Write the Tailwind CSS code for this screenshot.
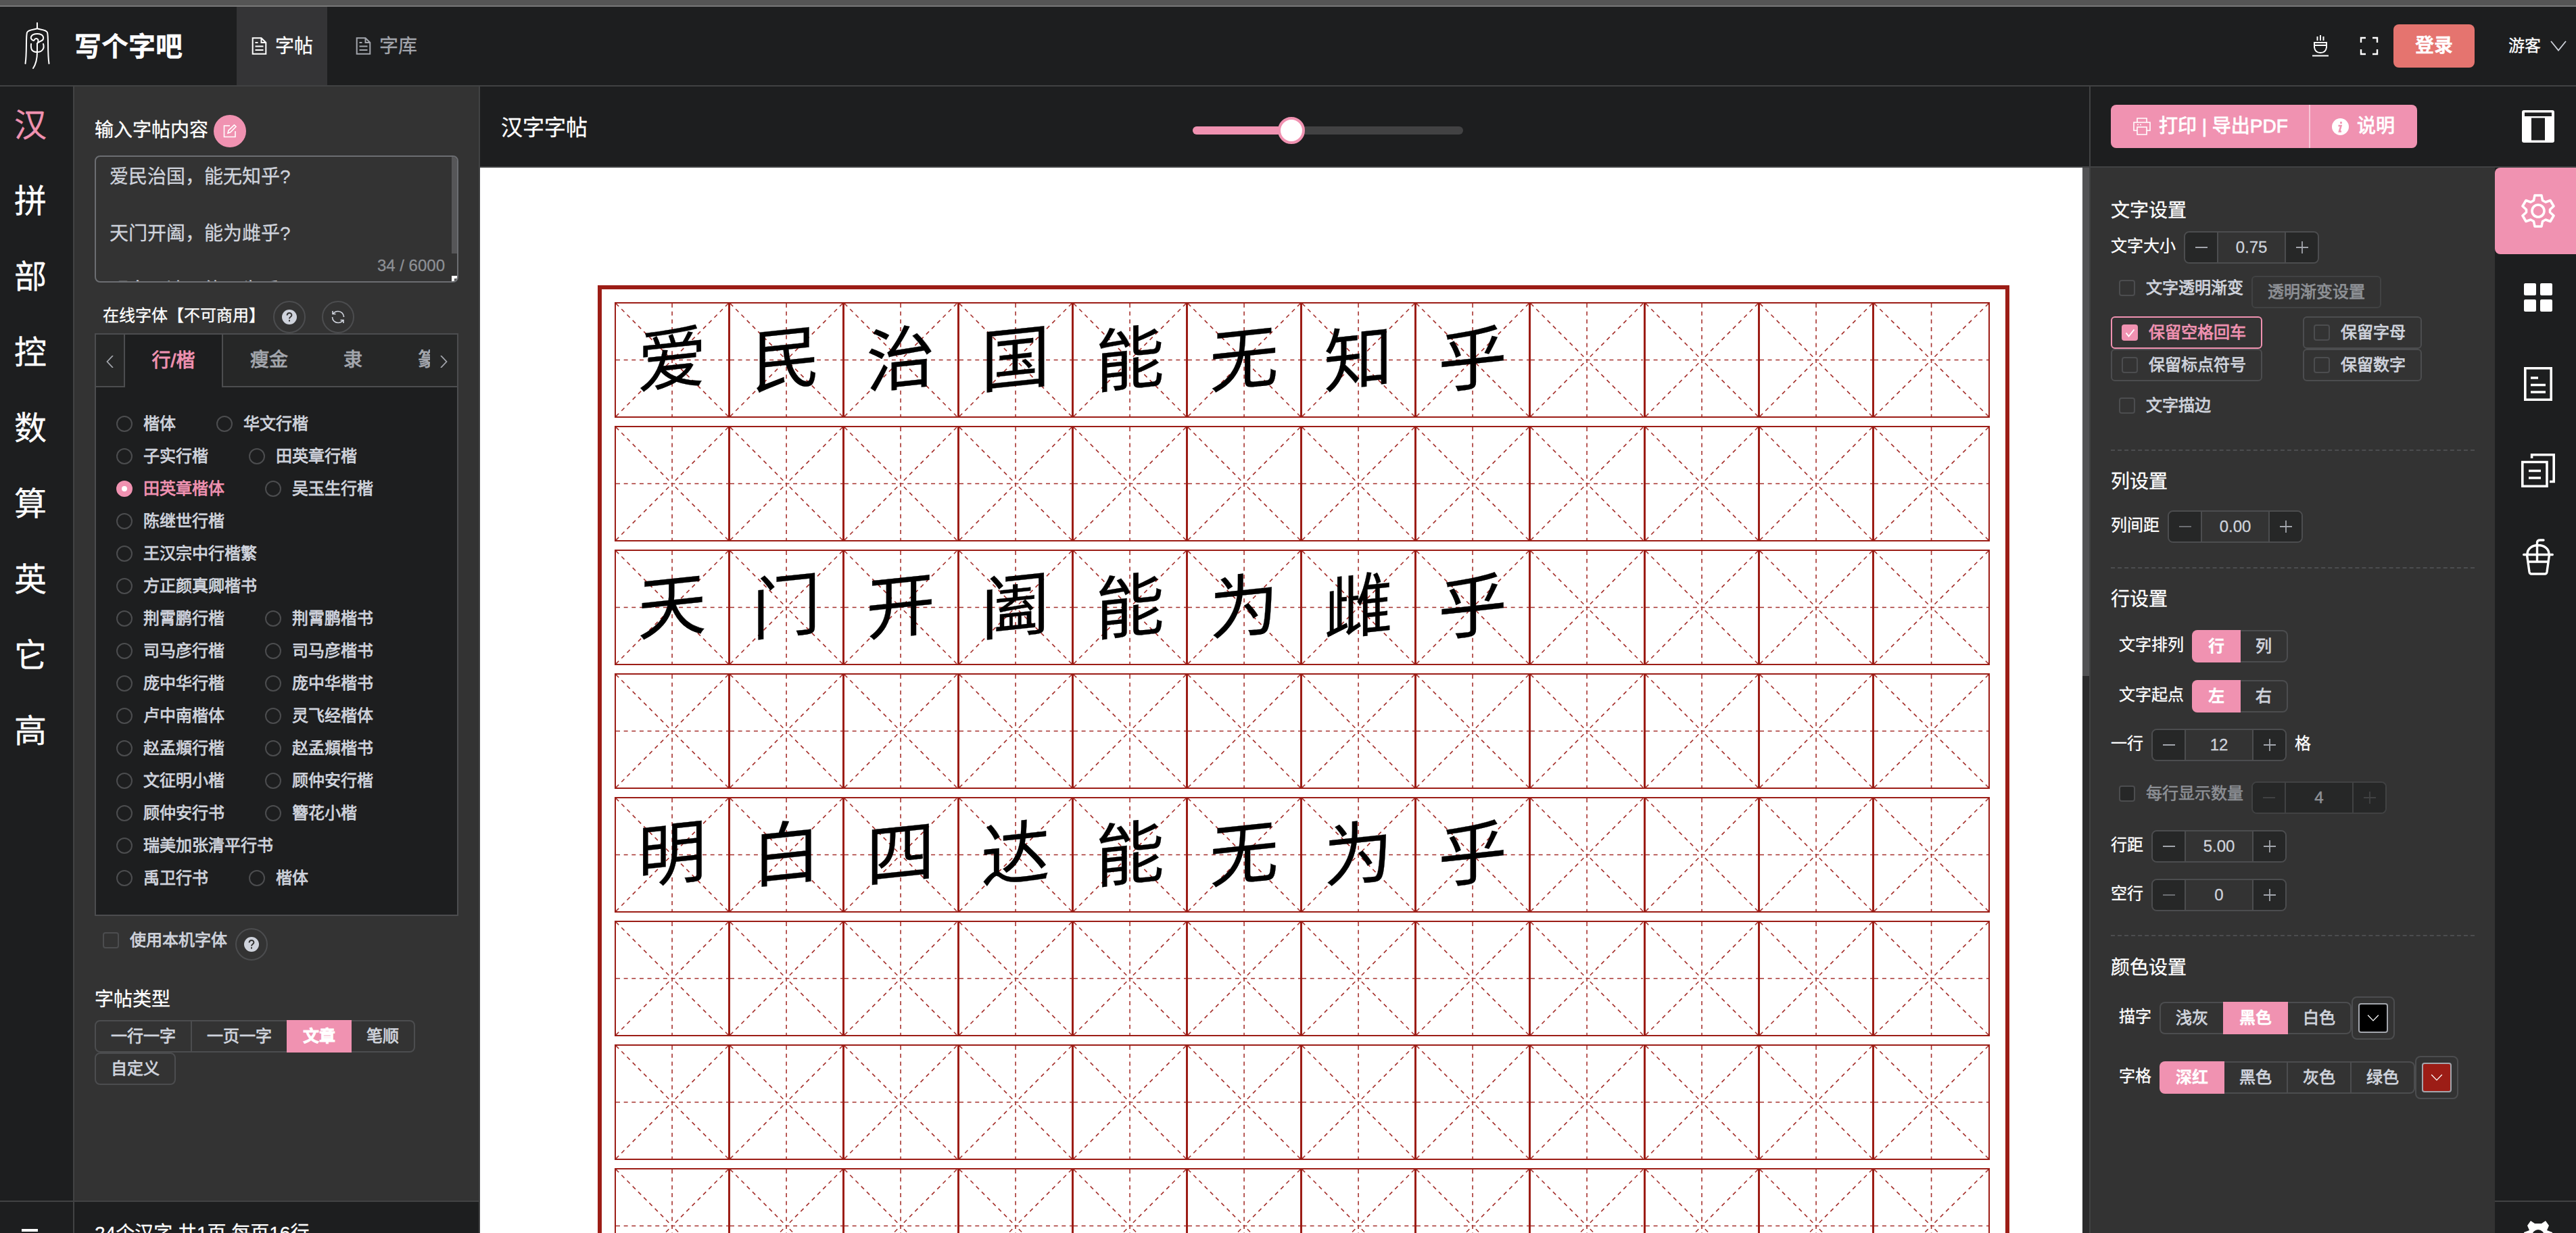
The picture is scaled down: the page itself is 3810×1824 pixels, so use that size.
<!DOCTYPE html>
<html lang="zh-CN">
<head>
<meta charset="utf-8">
<title>写个字吧</title>
<script src="https://cdn.jsdelivr.net/npm/@tailwindcss/browser@4"></script>
</head>
<body class="w-[3810px] h-[1824px] overflow-hidden bg-[#1d1e1f] text-white text-[24px] leading-none whitespace-nowrap font-['Liberation_Sans','Noto_Sans_CJK_SC',sans-serif] [-webkit-text-stroke:0.3px_currentColor]">
<svg class="hidden">
  <symbol id="mi" viewBox="0 0 167 167" preserveAspectRatio="none">
    <g stroke="#a5302c" stroke-width="1.6" stroke-dasharray="6 5.7" fill="none">
      <path d="M0 83.5H167M83.5 0V167M0 0L83.5 83.5M167 0L83.5 83.5M167 167L83.5 83.5M0 167L83.5 83.5"/>
    </g>
  </symbol>
  <symbol id="doc" viewBox="0 0 22 26"><path d="M1.2 1.2H14L20.8 8V24.8H1.2ZM14 1.2V8H20.8M5 8H9M5 13.5H17M5 19H17" fill="none" stroke="currentColor" stroke-width="2"/></symbol>
  <symbol id="help" viewBox="0 0 22 22"><circle cx="11" cy="11" r="11" fill="#cfd3dc"/><path d="M7.6 8.6C7.6 3.8 14.4 3.9 14.4 8.2C14.4 10.8 11 10.8 11 13.4M11 15.2V17.6" fill="none" stroke="#333" stroke-width="2"/></symbol>
  <symbol id="minus" viewBox="0 0 18 18"><path d="M0 9H18" stroke="currentColor" stroke-width="2"/></symbol>
  <symbol id="plus" viewBox="0 0 18 18"><path d="M0 9H18M9 0V18" stroke="currentColor" stroke-width="1.8"/></symbol>
  <symbol id="down" viewBox="0 0 24 14"><path d="M1 1L12 12.5L23 1" fill="none" stroke="currentColor" stroke-width="1.8"/></symbol>
</svg>

<div class="flex flex-col h-[1824px]">
  <div class="h-2.5 shrink-0 bg-[#555] border-b-2 border-[#787878]"></div>

  <header class="h-[118px] shrink-0 flex items-center border-b-2 border-[#414243]">
    <svg class="ml-9 w-[38px] h-[70px]" viewBox="0 0 38 70" fill="none" stroke="#fff" stroke-width="2" stroke-linecap="round">
      <path d="M19 1V9C17 11 6 10 4 15C2 22 4 45 1.500 61M19 9C21 11 32 10 34 15C36 22 34 45 36.500 61"/>
      <path d="M13.500 27C7 25 9 17 19 17C29 17 31 25 24 28L19 31V44C19 54 17 62 13 68M14 27C17 22 22 24 20 30M10 32C9 42 13 44 19 44C27 44 30 38 28 32"/>
    </svg>
    <div class="ml-9 text-[40px] font-bold w-[240px] pt-0.5">写个字吧</div>
    <div class="w-[134px] h-[116px] bg-[#343436] flex items-center pl-[22px] gap-3 text-[28px]"><svg class="w-[23px] h-[26px]"><use href="#doc"/></svg><span class="pt-0.5">字帖</span></div>
    <div class="ml-5 pl-[22px] flex items-center gap-3 text-[28px] text-[#a3a6ad]"><svg class="w-[23px] h-[26px]"><use href="#doc"/></svg><span class="pt-0.5">字库</span></div>
    <div class="ml-auto flex items-center">
      <svg class="w-[26px] h-[32px]" viewBox="0 0 26 32" fill="none" stroke="#fff" stroke-width="2"><path d="M8.500 2V8M13 0V8M17.500 2V8M4 11H22V18Q21 26 13 26Q5 26 4 18ZM4 15H22M1 30.500H25" /></svg>
      <svg class="ml-[45px] w-[28px] h-[28px]" viewBox="0 0 28 28" fill="none" stroke="#fff" stroke-width="2.400"><path d="M2 9V2H9M19 2H26V9M26 19V26H19M9 26H2V19"/></svg>
      <div class="ml-[22px] w-[120px] h-16 rounded-lg bg-[#e5746f] flex items-center justify-center text-[28px] font-bold">登录</div>
      <div class="ml-[50px]">游客</div>
      <svg class="ml-3.5 mr-3.5 w-6 h-4 text-[#cfd3dc]" viewBox="0 0 24 16"><path d="M1 1L12 14.500L23 1" fill="none" stroke="currentColor" stroke-width="1.800"/></svg>
    </div>
  </header>

  <div class="flex-1 min-h-0 flex">
    <!-- category rail -->
    <nav class="w-[110px] border-r-2 border-[#414243] flex flex-col">
      <div class="flex-1 flex flex-col text-[48px] pl-[21px] pt-0.5">
        <div class="h-28 flex items-center text-[#f092b1]">汉</div>
        <div class="h-28 flex items-center">拼</div>
        <div class="h-28 flex items-center">部</div>
        <div class="h-28 flex items-center">控</div>
        <div class="h-28 flex items-center">数</div>
        <div class="h-28 flex items-center">算</div>
        <div class="h-28 flex items-center">英</div>
        <div class="h-28 flex items-center">它</div>
        <div class="h-28 flex items-center">高</div>
      </div>
      <div class="h-12 border-t-2 border-[#414243] pt-10 pl-8"><div class="w-6 h-1 bg-white"></div></div>
    </nav>

    <!-- content and font panel -->
    <aside class="w-[600px] bg-[#333] border-r-2 border-[#414243] flex flex-col">
      <div class="flex-1 min-h-0 px-[30px] pt-[42px]">
        <div class="h-12 flex items-center text-[28px]"><span class="pb-0.5">输入字帖内容</span>
          <div class="ml-2 size-12 rounded-full bg-[#f092b1] flex items-center justify-center"><svg class="size-5" viewBox="0 0 20 20" fill="none" stroke="#fff" stroke-width="1.600"><path d="M10 2H1.500V18.500H18V10M7 13L8 9L16.500 .8L19 3.300L10.700 11.800Z"/></svg></div>
        </div>
        <div class="relative mt-3 h-[188px] rounded-lg border-2 border-[#6c6e72] overflow-hidden pl-5 pt-[9px] text-[28px] leading-[42px] text-[#cfd3dc]">
          <div>爱民治国，能无知乎?</div><div class="h-[42px]"></div>
          <div>天门开阖，能为雌乎?</div><div class="h-[42px]"></div>
          <div>明白四达，能无为乎?</div>
          <div class="absolute right-[18px] bottom-2 text-[24px] leading-[30px] text-[#8d9095]">34 / 6000</div>
          <div class="absolute -right-0.5 -top-0.5 w-2.5 h-[145px] bg-[#565658]"></div>
          <div class="absolute -right-0.5 -bottom-0.5 size-2.5 bg-white"><div class="absolute right-0.5 bottom-0.5 w-1 h-1 bg-[#555]"></div></div>
        </div>
        <div class="mt-[27px] h-12 flex items-center pl-3"><span class="w-[252px] pb-1">在线字体【不可商用】</span>
          <div class="size-12 rounded-full border-2 border-[#4c4d4f] flex items-center justify-center"><svg class="size-[22px]"><use href="#help"/></svg></div>
          <div class="ml-6 size-12 rounded-full border-2 border-[#4c4d4f] flex items-center justify-center"><svg class="size-5" viewBox="0 0 20 20" fill="none" stroke="#cfd3dc" stroke-width="1.600"><path d="M2 1V5.500H6.500M2.500 5.500C4.500 2.500 7 1.500 10 1.500C14.500 1.500 18.500 5 18.500 10M18 19V14.500H13.500M17.500 14.500C15.500 17.500 13 18.500 10 18.500C5.500 18.500 1.500 15 1.500 10"/></svg></div>
        </div>
        <div class="h-[862px] border-2 border-[#4c4d4f] bg-[#1d1e1f] flex flex-col">
          <div class="h-[78px] flex text-[28px] text-[#a3a6ad] bg-[#262727] [-webkit-text-stroke:0.9px_currentColor]">
            <div class="w-[43px] border-r-2 border-b-2 border-[#4c4d4f] flex items-center justify-center pt-1"><svg class="w-[11px] h-[18px]" viewBox="0 0 11 18"><path d="M10 0L1.500 9L10 18" fill="none" stroke="currentColor" stroke-width="1.800"/></svg></div>
            <div class="w-[145px] border-r-2 border-[#4c4d4f] bg-[#1d1e1f] text-[#f092b1] flex items-center justify-center">行/楷</div>
            <div class="flex-1 border-b-2 border-[#4c4d4f] flex items-center">
              <span class="ml-10">瘦金</span><span class="ml-[82px] w-7">隶</span><span class="ml-[82px] w-[18px] overflow-hidden leading-10">篆</span>
              <svg class="ml-[15px] mt-1 w-[11px] h-[18px]" viewBox="0 0 11 18"><path d="M1 0L9.500 9L1 18" fill="none" stroke="currentColor" stroke-width="1.800"/></svg>
            </div>
          </div>
          <div id="fonts" class="pt-[30px] pl-[30px] text-[#cfd3dc] [-webkit-text-stroke:0.8px_currentColor]"></div>
        </div>
        <div class="mt-[18px] h-12 flex items-center pl-3 text-[#cfd3dc] [-webkit-text-stroke:0.8px_currentColor]">
          <div class="mb-3 size-6 rounded border-2 border-[#4c4d4f]"></div><span class="ml-4 mb-3">使用本机字体</span>
          <div class="ml-3 size-12 rounded-full border-2 border-[#4c4d4f] flex items-center justify-center"><svg class="size-[22px]"><use href="#help"/></svg></div>
        </div>
        <div class="mt-8 h-12 flex items-center pt-1 text-[28px]">字帖类型</div>
        <div class="mt-2 flex h-12 text-[#cfd3dc] [-webkit-text-stroke:0.8px_currentColor]">
          <div class="w-36 border-2 border-[#4c4d4f] rounded-l-lg flex items-center justify-center">一行一字</div>
          <div class="w-[140px] border-y-2 border-[#4c4d4f] flex items-center justify-center">一页一字</div>
          <div class="w-24 bg-[#f092b1] text-white flex items-center justify-center font-bold">文章</div>
          <div class="w-[94px] border-2 border-l-0 border-[#4c4d4f] rounded-r-lg flex items-center justify-center">笔顺</div>
        </div>
        <div class="w-[120px] h-12 border-2 border-[#4c4d4f] rounded-lg flex items-center justify-center text-[#cfd3dc] [-webkit-text-stroke:0.8px_currentColor]">自定义</div>
      </div>
      <div class="h-12 shrink-0 overflow-hidden bg-[#1d1e1f] border-t-2 border-[#414243] pl-[30px] pt-[33px] text-[28px]">24个汉字 共1页 每页16行</div>
    </aside>

    <!-- worksheet -->
    <main class="w-[2380px] flex flex-col">
      <div class="h-[120px] shrink-0 border-b-2 border-[#414243] flex items-center pl-[31px]">
        <span class="w-[1023px] text-[32px] pt-1">汉字字帖</span>
        <div class="relative mt-3 w-[400px] h-3 rounded-md bg-[#424243]">
          <div class="w-[146px] h-3 rounded-l-md bg-[#f092b1]"></div>
          <div class="absolute left-[126px] -top-3.5 size-10 rounded-full border-4 border-[#f092b1] bg-white"></div>
        </div>
      </div>
      <div class="flex-1 min-h-0 flex">
        <div class="w-[2370px] overflow-hidden bg-white pt-[174px] pl-[174px]">
          <div id="sheet" class="w-[2088px] h-[2980px] border-[6px] border-[#9c1d16] pt-[19px] pl-[19px] text-black flex flex-col gap-3"></div>
        </div>
        <div class="w-2.5 bg-[#2b2b2c]"><div class="h-[752px] bg-[#525254]"></div></div>
      </div>
    </main>

    <!-- settings panel -->
    <div class="w-[720px] border-l-2 border-[#414243] flex flex-col">
      <div class="h-[120px] shrink-0 border-b-2 border-[#414243] flex items-center pl-[30px]">
        <div class="flex h-16 rounded-lg overflow-hidden bg-[#f092b1] text-[28px] [-webkit-text-stroke:0.9px_currentColor]">
          <div class="w-[295px] border-r-2 border-[#f7c5d6] flex items-center pl-[33px]">
            <svg class="w-[26px] h-[26px] mr-3" viewBox="0 0 26 26" fill="none" stroke="#fff" stroke-width="1.600"><path d="M6 7V1H20V7M6 19H1V7H25V19H20M6 14H20V25H6ZM6 10.500H8M10 10.500H12"/></svg>
            <span>打印 | 导出PDF</span>
          </div>
          <div class="w-[158px] flex items-center pl-8">
            <svg class="size-[25px] mr-3" viewBox="0 0 25 25"><circle cx="12.500" cy="12.500" r="12.500" fill="#fff"/><path d="M13.500 5V8M9.500 11H13.500L11 19.500H14" fill="none" stroke="#f092b1" stroke-width="2.600"/></svg>
            <span>说明</span>
          </div>
        </div>
        <svg class="ml-[155px] size-12" viewBox="0 0 48 48"><rect width="48" height="48" rx="3" fill="#fff"/><path d="M4 3.500H44V9H4ZM14 11.500H34V44.500H14Z" fill="#1d1e1f"/></svg>
      </div>
      <div class="flex-1 min-h-0 flex">
        <div class="w-[598px] bg-[#333] pl-[30px] pt-[38px] flex flex-col">
          <h2 class="h-12 flex items-center pt-1 text-[28px]">文字设置</h2>
          <div class="mt-2 flex items-center"><span class="pb-1 mr-3">文字大小</span><div data-num="0.75"></div></div>
          <div class="mt-[18px] pl-3 flex text-[#cfd3dc] [-webkit-text-stroke:0.8px_currentColor]">
            <div class="mt-1.5 size-6 rounded border-2 border-[#4c4d4f]"></div><span class="ml-4 mt-1.5 mr-3">文字透明渐变</span>
            <div class="w-48 h-12 rounded-md border-2 border-[#414243] text-[#8d9095] flex items-center justify-center">透明渐变设置</div>
          </div>
          <div class="mt-3 grid grid-cols-[224px_176px] gap-x-[60px] text-[#cfd3dc] [-webkit-text-stroke:0.8px_currentColor]">
            <div class="h-12 rounded-md border-2 border-[#f092b1] text-[#f092b1] flex items-center gap-4 pl-3.5"><svg class="size-6" viewBox="0 0 24 24"><rect width="24" height="24" rx="4" fill="#f092b1"/><path d="M6.500 12.500L10.500 17.500L18.500 7.500" fill="none" stroke="#fff" stroke-width="2"/></svg>保留空格回车</div>
            <div class="h-12 rounded-md border-2 border-[#4c4d4f] flex items-center gap-4 pl-3.5"><div class="size-6 rounded border-2 border-[#4c4d4f]"></div>保留字母</div>
            <div class="h-12 rounded-md border-2 border-[#4c4d4f] flex items-center gap-4 pl-3.5"><div class="size-6 rounded border-2 border-[#4c4d4f]"></div>保留标点符号</div>
            <div class="h-12 rounded-md border-2 border-[#4c4d4f] flex items-center gap-4 pl-3.5"><div class="size-6 rounded border-2 border-[#4c4d4f]"></div>保留数字</div>
          </div>
          <div class="mt-3 h-12 pl-3 flex items-center gap-4 text-[#cfd3dc] [-webkit-text-stroke:0.8px_currentColor]"><div class="size-6 rounded border-2 border-[#4c4d4f]"></div>文字描边</div>
          <div class="mt-[41px] w-[538px] h-0 border-t-2 border-dashed border-[#4c4d4f]"></div>
          <h2 class="mt-5 h-12 flex items-center pt-1 text-[28px]">列设置</h2>
          <div class="mt-5 flex items-center"><span class="pb-1 mr-3">列间距</span><div data-num="0.00" data-min="1"></div></div>
          <div class="mt-9 w-[538px] h-0 border-t-2 border-dashed border-[#4c4d4f]"></div>
          <h2 class="mt-5 h-12 flex items-center pt-1 text-[28px]">行设置</h2>
          <div class="mt-[23px] h-12 pl-3 flex items-center"><span class="pb-1 mr-3">文字排列</span>
            <div class="w-[72px] h-12 rounded-l-lg bg-[#f092b1] flex items-center justify-center font-bold">行</div><div class="w-[70px] h-12 rounded-r-lg border-2 border-l-0 border-[#4c4d4f] text-[#cfd3dc] flex items-center justify-center [-webkit-text-stroke:0.8px_currentColor]">列</div></div>
          <div class="mt-[26px] h-12 pl-3 flex items-center"><span class="pb-1 mr-3">文字起点</span>
            <div class="w-[72px] h-12 rounded-l-lg bg-[#f092b1] flex items-center justify-center font-bold">左</div><div class="w-[70px] h-12 rounded-r-lg border-2 border-l-0 border-[#4c4d4f] text-[#cfd3dc] flex items-center justify-center [-webkit-text-stroke:0.8px_currentColor]">右</div></div>
          <div class="mt-6 flex items-center"><span class="pb-1 mr-3">一行</span><div data-num="12"></div><span class="pb-1 ml-3">格</span></div>
          <div class="mt-[30px] pl-3 flex text-[#8d9095] [-webkit-text-stroke:0.6px_currentColor]">
            <div class="mt-1.5 size-6 rounded border-2 border-[#4c4d4f] bg-[#262727]"></div><span class="ml-4 mt-1.5 mr-3">每行显示数量</span><div data-num="4" data-off="1"></div>
          </div>
          <div class="mt-6 flex items-center"><span class="pb-1 mr-3">行距</span><div data-num="5.00"></div></div>
          <div class="mt-6 flex items-center"><span class="pb-1 mr-3">空行</span><div data-num="0" data-min="1"></div></div>
          <div class="mt-[35px] w-[538px] h-0 border-t-2 border-dashed border-[#4c4d4f]"></div>
          <h2 class="mt-[21px] h-12 flex items-center pt-1 text-[28px]">颜色设置</h2>
          <div class="mt-5 pl-3 flex items-center text-[#cfd3dc] [-webkit-text-stroke:0.8px_currentColor]"><span class="pb-1 mr-3 text-white [-webkit-text-stroke:0.3px_currentColor]">描字</span>
            <div class="w-[94px] h-12 rounded-l-lg border-2 border-r-0 border-[#4c4d4f] flex items-center justify-center">浅灰</div>
            <div class="w-24 h-12 bg-[#f092b1] text-white font-bold flex items-center justify-center [-webkit-text-stroke:0.3px_currentColor]">黑色</div>
            <div class="w-[94px] h-12 rounded-r-lg border-2 border-l-0 border-[#4c4d4f] flex items-center justify-center">白色</div>
            <div class="size-16 rounded-lg border-2 border-[#4c4d4f] flex items-center justify-center"><div class="size-11 rounded border-2 border-[#a3a6ad] bg-black text-white flex items-center justify-center"><svg class="w-[18px] h-2.5"><use href="#down"/></svg></div></div>
          </div>
          <div class="mt-6 pl-3 flex items-center text-[#cfd3dc] [-webkit-text-stroke:0.8px_currentColor]"><span class="pb-1 mr-3 text-white [-webkit-text-stroke:0.3px_currentColor]">字格</span>
            <div class="w-24 h-12 rounded-l-lg bg-[#f092b1] text-white font-bold flex items-center justify-center [-webkit-text-stroke:0.3px_currentColor]">深红</div>
            <div class="w-[94px] h-12 border-2 border-l-0 border-[#4c4d4f] flex items-center justify-center">黑色</div>
            <div class="w-[94px] h-12 border-2 border-l-0 border-[#4c4d4f] flex items-center justify-center">灰色</div>
            <div class="w-[94px] h-12 rounded-r-lg border-2 border-l-0 border-[#4c4d4f] flex items-center justify-center">绿色</div>
            <div class="size-16 rounded-lg border-2 border-[#4c4d4f] flex items-center justify-center"><div class="size-11 rounded border-2 border-[#a3a6ad] bg-[#9c1d16] text-white flex items-center justify-center"><svg class="w-[18px] h-2.5"><use href="#down"/></svg></div></div>
          </div>
        </div>
        <div class="w-[120px] flex flex-col">
          <div class="h-32 rounded-l-lg bg-[#f092b1] flex items-center justify-center pl-2">
            <svg class="size-[50px]" viewBox="0 0 50 50" fill="none" stroke="#fff" stroke-width="3.600"><path stroke-linejoin="round" d="M20 2H30L31.500 9.500L36 12L43 9.500L48 18L42.500 23V27L48 32L43 40.500L36 38L31.500 40.500L30 48H20L18.500 40.500L14 38L7 40.500L2 32L7.500 27V23L2 18L7 9.500L14 12L18.500 9.500Z"/><circle cx="25" cy="25" r="9"/></svg>
          </div>
          <div class="h-32 flex items-center justify-center pl-2"><svg class="size-[42px]" viewBox="0 0 42 42" fill="#fff"><rect width="18" height="18" rx="2"/><rect x="24" width="18" height="18" rx="2"/><rect y="24" width="18" height="18" rx="2"/><rect x="24" y="24" width="18" height="18" rx="2"/></svg></div>
          <div class="h-32 flex items-center justify-center pl-2"><svg class="w-[42px] h-[50px]" viewBox="0 0 42 50" fill="none" stroke="#fff" stroke-width="3.600"><path d="M1.800 1.800H40.200V48.200H1.800ZM10 16H21M10 26.500H32M10 37H32"/></svg></div>
          <div class="h-32 flex items-center justify-center pl-2"><svg class="w-[50px] h-[50px]" viewBox="0 0 50 50" fill="none" stroke="#fff" stroke-width="3.600"><path d="M1.800 12.500H38V48.200H1.800ZM15.600 7V1.800H48.200V41.500H42M11 25.500H29M11 36H29"/></svg></div>
          <div class="h-32 flex items-center justify-center pl-2"><svg class="w-[46px] h-[54px]" viewBox="0 0 46 54" fill="none" stroke="#fff" stroke-width="3.400" stroke-linecap="round"><path d="M1.700 23.500H44.300M7 23C7 5 39 5 39 23M6.500 24L10 49Q10.500 52 13 52H33Q35.500 52 36 49L39.500 24M8.500 34H37.500M21.500 33V6Q21.500 2 26 2H31"/></svg></div>
          <div class="mt-auto h-12 overflow-hidden border-t-2 border-[#414243] pt-7 flex justify-center pl-2"><svg class="shrink-0 size-12" viewBox="0 0 48 48"><path d="M13 0L19 4H29L35 0L40 7L37 14L45 17V32L24 44L3 32V17L11 14L8 7Z" fill="#fff"/><circle cx="24" cy="22" r="9" fill="#1d1e1f"/></svg></div>
        </div>
      </div>
    </div>
  </div>
</div>

<script>
  // Font choices, one array per visual row
  const fonts = [['楷体','华文行楷'],['子实行楷','田英章行楷'],['田英章楷体','吴玉生行楷'],['陈继世行楷'],['王汉宗中行楷繁'],['方正颜真卿楷书'],['荆霄鹏行楷','荆霄鹏楷书'],['司马彦行楷','司马彦楷书'],['庞中华行楷','庞中华楷书'],['卢中南楷体','灵飞经楷体'],['赵孟頫行楷','赵孟頫楷书'],['文征明小楷','顾仲安行楷'],['顾仲安行书','簪花小楷'],['瑞美加张清平行书'],['禹卫行书','楷体']];
  document.getElementById('fonts').innerHTML = fonts.map(r => '<div class="h-12 flex items-center gap-[60px]">' + r.map(n => {
    const on = n === '田英章楷体';
    return `<div class="flex items-center gap-4 ${on ? 'text-[#f092b1]' : ''}"><div class="size-6 rounded-full ${on ? 'border-8 border-[#f092b1] bg-white' : 'border-2 border-[#4c4d4f]'}"></div>${n}</div>`;
  }).join('') + '</div>').join('');

  // Number steppers
  document.querySelectorAll('[data-num]').forEach(el => {
    const off = el.dataset.off, min = el.dataset.min;
    const side = 'w-[47px] bg-[#262727] flex items-center justify-center';
    el.className = 'w-[200px] h-12 rounded-lg border-2 overflow-hidden flex ' + (off ? 'border-[#414243] bg-[#262727] text-[#8d9095]' : 'border-[#4c4d4f] text-[#cfd3dc]');
    el.innerHTML = `<div class="${side} ${off ? 'text-[#414243]' : min ? 'text-[#6c6e72]' : 'text-[#a3a6ad]'}"><svg class="size-[18px]"><use href="#minus"/></svg></div>
      <div class="flex-1 border-x-2 ${off ? 'border-[#414243]' : 'border-[#4c4d4f]'} flex items-center justify-center">${el.dataset.num}</div>
      <div class="${side} ${off ? 'text-[#414243]' : 'text-[#a3a6ad]'}"><svg class="size-[18px]"><use href="#plus"/></svg></div>`;
  });

  // Practice sheet: 12 cells per row
  const lines = ['爱民治国能无知乎','','天门开阖能为雌乎','','明白四达能无为乎','','',''];
  document.getElementById('sheet').innerHTML = lines.map(t => '<div class="w-[2034px] h-[171px] shrink-0 border-2 border-[#9c1d16] grid grid-cols-12 divide-x-[3px] divide-[#9c1d16]">' +
    Array.from({length: 12}, (_, i) => `<div class="grid place-items-center"><svg class="col-start-1 row-start-1 w-full h-[167px]"><use href="#mi"/></svg><span class="col-start-1 row-start-1 text-[102px] -skew-y-6">${t[i] || ''}</span></div>`).join('') + '</div>').join('');
</script>
</body>
</html>
